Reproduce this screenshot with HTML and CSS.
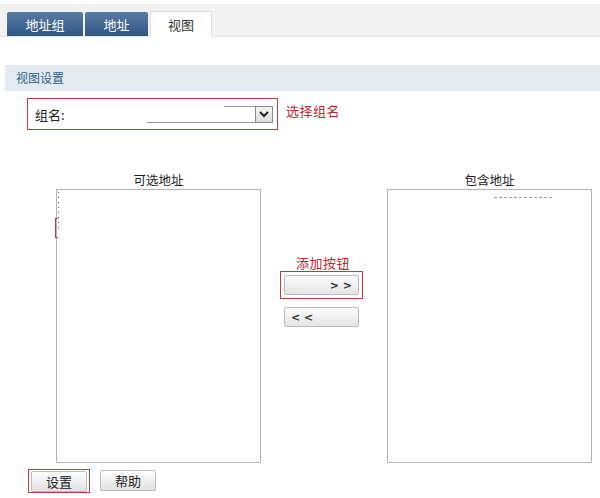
FILE: index.html
```html
<!DOCTYPE html>
<html lang="zh-CN">
<head>
    <meta charset="UTF-8">
    <title>视图</title>
    <link rel="stylesheet" href="styles.css">
</head>
<body>
    <div class="tabbar">
        <div class="tab tab-group">地址组</div>
        <div class="tab tab-addr">地址</div>
        <div class="tab tab-view active">视图</div>
    </div>

    <div class="section-title">视图设置</div>

    <div class="group-row">
        <div class="mark group-box">
            <span class="group-label">组名:</span>
            <div class="select">
                <div class="select-field"></div>
                <div class="select-btn">
                    <svg width="10" height="7" viewBox="0 0 10 7"><path d="M1 1 L5 5 L9 1" fill="none" stroke="#222" stroke-width="2"/></svg>
                </div>
            </div>
        </div>
        <span class="hint hint-group">选择组名</span>
    </div>

    <div class="transfer">
        <div class="list-col">
            <div class="list-title">可选地址</div>
            <div class="list-box">
                <span class="dots"></span>
                <span class="bracket"></span>
            </div>
        </div>

        <div class="middle-col">
            <div class="hint hint-add">添加按钮</div>
            <div class="mark add-box">
                <button class="move-btn move-right">&gt; &gt;</button>
            </div>
            <button class="move-btn move-left">&lt; &lt;</button>
        </div>

        <div class="list-col">
            <div class="list-title">包含地址</div>
            <div class="list-box">
                <div class="dash-line"></div>
            </div>
        </div>
    </div>

    <div class="actions">
        <div class="mark save-box">
            <button class="btn">设置</button>
        </div>
        <button class="btn btn-help">帮助</button>
    </div>
</body>
</html>
```

FILE: styles.css
```css
body {
    margin: 0;
    background-color: #fff;
    font-family: "Noto Sans CJK SC", "DejaVu Sans", sans-serif;
    font-size: 12px;
    color: #222;
}

/* tabs */
.tabbar {
    margin-top: 4px;
    height: 33px;
    background-color: #f2f2f2;
    border-bottom: 1px solid #e6e6e6;
    padding-left: 7px;
    display: flex;
    align-items: flex-end;
    gap: 2px;
    box-sizing: border-box;
}

.tab {
    height: 24px;
    line-height: 25px;
    text-align: center;
    font-size: 13px;
    color: #fff;
    background: linear-gradient(#5a7ca3, #2f5684);
    border-radius: 2px 2px 0 0;
}

.tab-group { width: 76px; }
.tab-addr { width: 63px; }
.tab-view { width: 62px; }

.tab.active {
    height: 26px;
    margin-bottom: -1px;
    background: #fff;
    color: #333;
    border: 1px solid #e0e0e0;
    border-bottom: none;
    box-sizing: border-box;
}

/* section header */
.section-title {
    margin: 28px 0 0 5px;
    height: 26px;
    line-height: 26px;
    padding-left: 11px;
    background-color: #e3ebf1;
    color: #2f5f8f;
}

/* red annotation boxes */
.mark {
    border: 1px solid #c3373f;
    box-sizing: border-box;
}

.hint {
    color: #c0282e;
    font-size: 13px;
    letter-spacing: 0.5px;
}

/* group select */
.group-row {
    margin: 7px 0 0 27px;
    display: flex;
    align-items: flex-start;
    gap: 8px;
}

.group-box {
    width: 251px;
    height: 32px;
    padding-left: 7px;
    display: flex;
    align-items: center;
    justify-content: space-between;
    padding-right: 4px;
}

.group-label {
    font-size: 13px;
}

.select {
    display: flex;
    align-items: flex-end;
}

.select-field {
    width: 108px;
    height: 16px;
    border-bottom: 1px solid #999;
    border-left: 1px solid transparent;
    background: linear-gradient(#999, #999) right top / 31px 1px no-repeat;
}

.select-btn {
    width: 18px;
    height: 17px;
    border: 1px solid #8a8a8a;
    background: linear-gradient(#f4f4f4, #dcdcdc);
    box-sizing: border-box;
    display: flex;
    align-items: center;
    justify-content: center;
}

.hint-group {
    margin-top: 3px;
}

/* transfer lists */
.transfer {
    margin: 42px 0 0 56px;
    display: flex;
}

.list-col {
    width: 205px;
}

.list-title {
    height: 17px;
    line-height: 16px;
    text-align: center;
    font-size: 12.5px;
}

.list-box {
    position: relative;
    height: 274px;
    border: 1px solid #b4b4b4;
    box-sizing: border-box;
    background-color: #fff;
}

.dots {
    position: absolute;
    left: 1px;
    top: 2px;
    width: 1px;
    height: 40px;
    background: repeating-linear-gradient(#556 0 1px, transparent 1px 5px);
}

.bracket {
    position: absolute;
    left: -2px;
    top: 28px;
    width: 2px;
    height: 18px;
    border: 1px solid #c3373f;
    border-right: none;
}

.dash-line {
    margin: 7px 0 0 106px;
    width: 58px;
    border-top: 1px dashed #999;
}

.middle-col {
    width: 126px;
    padding: 83px 0 0 19px;
    box-sizing: border-box;
}

.hint-add {
    height: 16px;
    line-height: 16px;
    padding-left: 16px;
}

.add-box {
    width: 83px;
    height: 28px;
    padding: 3px;
}

.move-btn {
    display: block;
    width: 75px;
    height: 20px;
    padding: 0 6px;
    border: 1px solid #bbb;
    border-radius: 2px;
    background: linear-gradient(#fdfdfd, #e4e4e4);
    font-family: "DejaVu Sans", sans-serif;
    font-size: 11px;
    font-weight: bold;
    color: #333;
    cursor: pointer;
}

.move-right {
    text-align: right;
}

.move-left {
    margin: 8px 0 0 4px;
    text-align: left;
}

/* bottom buttons */
.actions {
    margin: 6px 0 0 28px;
    display: flex;
    align-items: flex-start;
    gap: 10px;
}

.save-box {
    width: 62px;
    height: 24px;
    padding: 1px 2px;
}

.btn {
    width: 56px;
    height: 21px;
    padding: 0;
    border: 1px solid #bbb;
    border-radius: 2px;
    background: linear-gradient(#fdfdfd, #e2e2e2);
    font-family: "Noto Sans CJK SC", sans-serif;
    font-size: 13px;
    color: #222;
    cursor: pointer;
}

.btn-help {
    margin-top: 1px;
}
```
